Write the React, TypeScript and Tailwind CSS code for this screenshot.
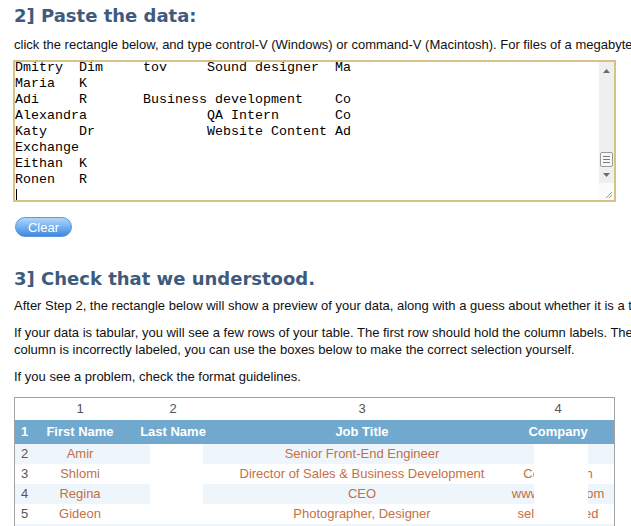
import React from "react";

function placeAt(segs: [number, string][]): string {
  let s = "";
  for (const [col, txt] of segs) {
    s = s.padEnd(col, " ") + txt;
  }
  return s;
}

const textLines: string[] = [
  placeAt([[0, "Dmitry"], [8, "Dim"], [16, "tov"], [24, "Sound designer"], [40, "Ma"]]),
  placeAt([[0, "Maria"], [8, "K"]]),
  placeAt([[0, "Adi"], [8, "R"], [16, "Business development"], [40, "Co"]]),
  placeAt([[0, "Alexandra"], [24, "QA Intern"], [40, "Co"]]),
  placeAt([[0, "Katy"], [8, "Dr"], [24, "Website Content"], [40, "Ad"]]),
  placeAt([[0, "Exchange"]]),
  placeAt([[0, "Eithan"], [8, "K"]]),
  placeAt([[0, "Ronen"], [8, "R"]]),
];

type Row = { n: number; first: string; job: string; company: string; light: boolean; hideLast: boolean; hideCo: boolean };

const rows: Row[] = [
  { n: 2, first: "Amir", job: "Senior Front-End Engineer", company: "", light: true, hideLast: true, hideCo: true },
  { n: 3, first: "Shlomi", job: "Director of Sales & Business Development", company: "CompuTech", light: false, hideLast: true, hideCo: true },
  { n: 4, first: "Regina", job: "CEO", company: "www.regen.com", light: true, hideLast: true, hideCo: true },
  { n: 5, first: "Gideon", job: "Photographer, Designer", company: "self-employed", light: false, hideLast: false, hideCo: true },
  { n: 6, first: "Dmitry", job: "Sound designer", company: "", light: true, hideLast: false, hideCo: false },
];

function Heading({ children }: { children: React.ReactNode }) {
  return (
    <h2 className="ml-[14px] whitespace-nowrap text-[18px] leading-[22px] font-bold text-[#3e5a7c] [font-family:'DejaVu_Sans',sans-serif]">
      {children}
    </h2>
  );
}

function ScrollBar() {
  return (
    <div className="flex w-[15px] flex-col bg-[#efefef]">
      <div className="flex h-[17px] items-center justify-center">
        <svg width="7" height="4" viewBox="0 0 7 4">
          <polygon points="0,4 7,4 3.5,0" fill="#6b6b6b" />
        </svg>
      </div>
      <div className="flex-1" />
      <div className="mx-auto flex h-[15px] w-[13px] flex-col items-center justify-center gap-[2px] rounded-[2px] border border-[#9a9a9a] bg-[#f7f7f7]">
        <div className="h-px w-[7px] bg-[#7a7a7a]" />
        <div className="h-px w-[7px] bg-[#7a7a7a]" />
        <div className="h-px w-[7px] bg-[#7a7a7a]" />
      </div>
      <div className="flex h-[16px] items-center justify-center">
        <svg width="7" height="4" viewBox="0 0 7 4">
          <polygon points="0,0 7,0 3.5,4" fill="#6b6b6b" />
        </svg>
      </div>
      <div className="flex h-[17px] items-end justify-end bg-[#fbfbfb] pb-[1px] pr-[1px]">
        <svg width="10" height="10" viewBox="0 0 10 10">
          <line x1="9" y1="3" x2="3" y2="9" stroke="#9a9a9a" strokeWidth="1" />
          <line x1="9" y1="6" x2="6" y2="9" stroke="#9a9a9a" strokeWidth="1" />
        </svg>
      </div>
    </div>
  );
}

export default function App() {
  const body = "[font-family:'Liberation_Sans',Arial,sans-serif] text-[13px] leading-[17px] text-[#111]";
  const grid = "grid grid-cols-[21px_88px_98px_280px_112px]";
  return (
    <div className="h-[526px] w-[631px] overflow-hidden bg-white">
      <div className="w-[1000px] pt-[5px]">
        <Heading>2] Paste the data:</Heading>
        <p className={`ml-[14px] mt-[9px] whitespace-nowrap ${body}`}>
          click the rectangle below, and type control-V (Windows) or command-V (Macintosh). For files of a megabyte or more, use the upload option.
        </p>

        <div className="ml-[13px] mt-[7px] flex h-[142px] w-[603px] border-2 border-[#d9c088] bg-white">
          <div className="flex-1 overflow-hidden">
            <div className="-mt-[2px] whitespace-pre text-[13.333px] leading-[16px] text-black [font-family:'Liberation_Mono','Courier_New',monospace]">
              {textLines.map((l, i) => (
                <div key={i} className="h-[16px]">{l}</div>
              ))}
              <div className="flex h-[16px] items-center">
                <div className="ml-[1px] h-[14px] w-px bg-black" />
              </div>
            </div>
          </div>
          <ScrollBar />
        </div>

        <button className="ml-[15px] mt-[15px] flex h-[20px] w-[57px] items-center justify-center rounded-full border border-[#5b98dc] bg-gradient-to-b from-[#b3d7f8] via-[#73b0f0] to-[#3f88df] text-[13px] leading-none text-white [font-family:'Liberation_Sans',Arial,sans-serif]">
          Clear
        </button>

        <div className="mt-[31px]">
          <Heading>3] Check that we understood.</Heading>
        </div>

        <p className={`ml-[14px] mt-[7px] whitespace-nowrap ${body}`}>
          After Step 2, the rectangle below will show a preview of your data, along with a guess about whether it is a table or a list.
        </p>
        <p className={`ml-[14px] mt-[10px] whitespace-nowrap ${body}`}>
          If your data is tabular, you will see a few rows of your table. The first row should hold the column labels. The program guesses each column's type; if a
          <br />
          column is incorrectly labeled, you can use the boxes below to make the correct selection yourself.
        </p>
        <p className={`ml-[14px] mt-[10px] whitespace-nowrap ${body}`}>
          If you see a problem, check the format guidelines.
        </p>

        <div className="ml-[14px] mt-[12px] w-[601px] border border-[#a3a3a3] [font-family:'Liberation_Sans',Arial,sans-serif] text-[13px]">
          <div className={`${grid} h-[22px] items-center bg-white text-[#555]`}>
            <div />
            <div className="text-center">1</div>
            <div className="text-center">2</div>
            <div className="text-center">3</div>
            <div className="text-center">4</div>
          </div>
          <div className={`${grid} h-[24px] items-center bg-[#70a9cd] font-bold text-white`}>
            <div className="pl-[6px]">1</div>
            <div className="text-center">First Name</div>
            <div className="text-center">Last Name</div>
            <div className="text-center">Job Title</div>
            <div className="text-center">Company</div>
          </div>
          {rows.map((r) => (
            <div key={r.n} className={`${grid} h-[20px] items-center ${r.light ? "bg-[#eef6fc]" : "bg-white"} text-[#c46f45]`}>
              <div className="pl-[6px] text-[#555]">{r.n}</div>
              <div className="text-center">{r.first}</div>
              <div className="flex h-full">
                {r.hideLast && <div className="ml-[26px] w-[53px] bg-white" />}
              </div>
              <div className="text-center">{r.job}</div>
              <div className="relative h-full">
                <div className="flex h-full items-center justify-center">{r.company}</div>
                {r.hideCo && <div className="absolute left-[32px] top-0 h-full w-[54px] bg-white" />}
              </div>
            </div>
          ))}
        </div>
      </div>
    </div>
  );
}
